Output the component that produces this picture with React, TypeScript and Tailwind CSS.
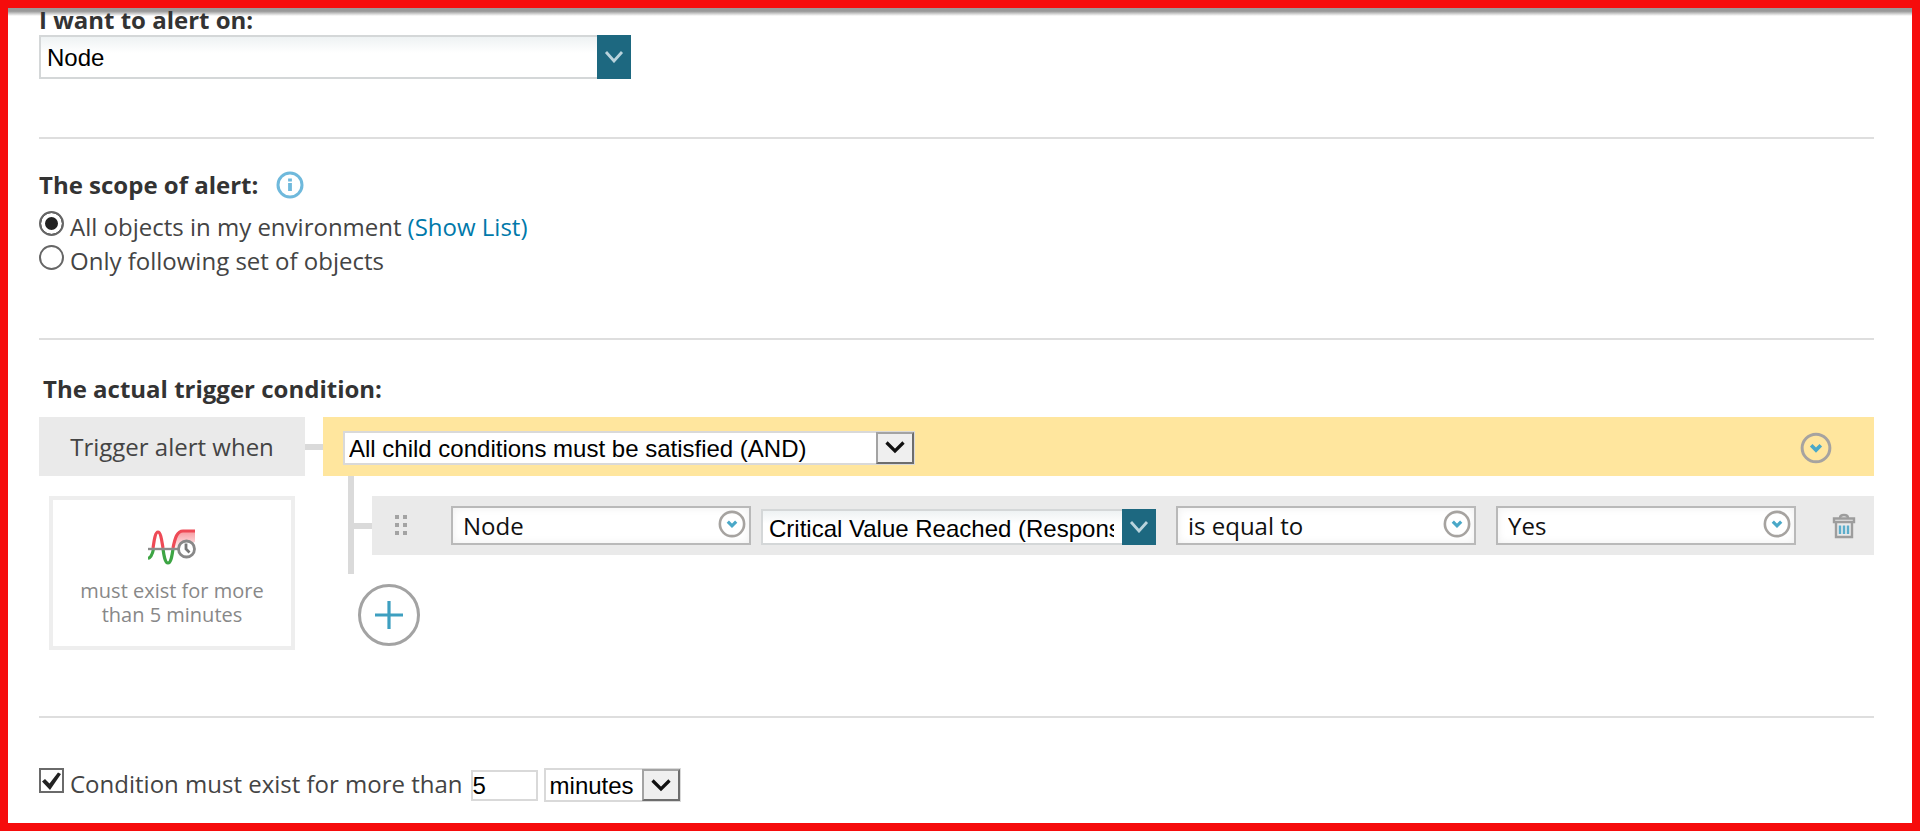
import { useState } from "react";
import type { ReactNode, SelectHTMLAttributes } from "react";

const Heading = ({ children }: { children: ReactNode }) => (
  <h2 className="text-2xl leading-8 font-bold text-[#333]">{children}</h2>
);

const Divider = () => <hr className="border-t-2 border-[#dedede]" />;

const RoundChevron = ({ className }: { className: string }) => (
  <svg viewBox="0 0 30 30" fill="none" className={className} aria-hidden="true">
    <circle cx="15" cy="15" r="13" stroke="#a6a3a0" strokeWidth="2.8" />
    <path d="M10.5 12.5l4.5 4.5 4.5-4.5" stroke="#4aa8c8" strokeWidth="3.4" />
  </svg>
);

type FieldProps = SelectHTMLAttributes<HTMLSelectElement> & { label: string; option: string };

// Combo box with the teal arrow cell
const ComboSelect = ({ label, option, className, ...rest }: FieldProps) => (
  <div className={`relative ${className}`}>
    <select
      aria-label={label}
      className="size-full appearance-none overflow-hidden border-2 border-[#d4d7d8] bg-linear-to-b from-[#eef2f3] to-white to-40% pt-0.5 pr-10 pl-1.5 font-[Liberation_Sans,Arial,sans-serif] text-black"
      {...rest}
    >
      <option>{option}</option>
    </select>
    <span className="pointer-events-none absolute inset-y-0 right-0 flex w-[34px] items-center justify-center bg-[#1d6880]">
      <svg width="20" height="12" viewBox="0 0 20 12" fill="none" aria-hidden="true">
        <path d="M2 1l8 9 8-9" stroke="#b9d3dc" strokeWidth="2.8" />
      </svg>
    </span>
  </div>
);

// Old style drop-down with the raised arrow button
const PlainSelect = ({ label, option, className, ...rest }: FieldProps) => (
  <div className={`relative h-[34px] ${className}`}>
    <select
      aria-label={label}
      className="size-full appearance-none border-2 border-[#d9d9d9] bg-white pr-10 pl-1 font-[Liberation_Sans,Arial,sans-serif] text-black"
      {...rest}
    >
      <option>{option}</option>
    </select>
    <span className="pointer-events-none absolute inset-y-px right-px flex w-[38px] items-center justify-center border-2 border-[#a3a3a3] border-r-[#6d6d6d] border-b-[#6d6d6d] bg-[#efefef]">
      <svg width="20" height="13" viewBox="0 0 20 13" fill="none" aria-hidden="true">
        <path d="M1.5 1.5l8.5 8.5 8.5-8.5" stroke="#111" strokeWidth="3.2" />
      </svg>
    </span>
  </div>
);

const RoundSelect = ({ label, option, className, ...rest }: FieldProps) => (
  <div className={`relative h-[39px] w-[300px] ${className}`}>
    <select
      aria-label={label}
      className="size-full appearance-none border-2 border-[#b9b9b9] bg-white pr-10 pl-[10px] text-[#111] shadow-[inset_0_0_8px_#eee]"
      {...rest}
    >
      <option>{option}</option>
    </select>
    <RoundChevron className="pointer-events-none absolute top-1 right-[5px] size-7" />
  </div>
);

const App = () => {
  const [scope, setScope] = useState("all");
  const [sustained, setSustained] = useState(true);
  const [duration, setDuration] = useState("5");

  const radioClass =
    "size-[25px] appearance-none rounded-full border-2 border-[#666] bg-white checked:bg-[#222] checked:shadow-[inset_0_0_0_4px_white]";

  return (
    <div className="relative min-h-screen border-8 border-[#f60c0c] bg-white pr-[38px] pl-[31px] font-['Open_Sans',sans-serif] text-2xl text-[#444]">
      <div className="pointer-events-none absolute inset-x-0 top-0 h-2 bg-linear-to-b from-[#999] from-40% to-transparent" />

      <section className="relative pb-[58px]">
        <h2 className="pb-[3px] text-2xl leading-6 font-bold text-[#333]">I want to alert on:</h2>
        <ComboSelect label="I want to alert on" option="Node" className="h-11 w-[592px]" />
      </section>
      <Divider />

      <section className="pt-[30px] pb-[60px]">
        <div className="flex items-center gap-[18px]">
          <Heading>The scope of alert:</Heading>
          <button type="button" aria-label="About the scope">
            <svg width="28" height="28" viewBox="0 0 28 28" fill="none" className="block">
              <circle cx="14" cy="14" r="12" stroke="#6fb9dc" strokeWidth="3" />
              <path d="M14 7.5v3M14 12v8" stroke="#6fb9dc" strokeWidth="3.8" />
            </svg>
          </button>
        </div>
        <div className="mt-[10px] flex h-[34px]">
          <input id="scope-all" type="radio" name="scope" className={radioClass} checked={scope === "all"} onChange={() => setScope("all")} />
          <label htmlFor="scope-all" className="ml-1.5">All objects in my environment</label>
          <a href="#list" className="ml-1.5 text-[#0079aa]">(Show List)</a>
        </div>
        <div className="flex h-[33px]">
          <input id="scope-some" type="radio" name="scope" className={radioClass} checked={scope === "some"} onChange={() => setScope("some")} />
          <label htmlFor="scope-some" className="ml-1.5">Only following set of objects</label>
        </div>
      </section>
      <Divider />

      <section className="pt-[33px] pb-[66px]">
        <div className="pl-1">
          <Heading>The actual trigger condition:</Heading>
        </div>
        <div className="mt-3 flex">
          <div className="flex w-[266px] shrink-0 flex-col">
            <div className="flex h-[59px] items-center justify-center bg-[#eaeaea]">Trigger alert when</div>
            <div className="mt-5 ml-[10px] flex h-[154px] w-[246px] flex-col items-center border-4 border-[#eee] pt-[29px] text-center text-xl leading-6 text-[#888]">
              <svg width="48" height="36" viewBox="0 0 48 36" fill="none" className="mb-[14px]" aria-hidden="true">
                <defs>
                  <linearGradient id="peak" x1="0" y1="0" x2="0" y2="1">
                    <stop offset="0" stopColor="#f4606a" stopOpacity="0.65" />
                    <stop offset="1" stopColor="#f4606a" stopOpacity="0.1" />
                  </linearGradient>
                </defs>
                <path d="M25 19C27 10 29 2 35 2h12v11L30 19z" fill="url(#peak)" />
                <path d="M5 19C6 13 7 3 10 3S14 14 15 19M25 19C27 9 29 2 35 2h12" stroke="#ee4a56" strokeWidth="3.2" />
                <path d="M0 29.5C3.5 28.5 4.5 25 5.5 20M15 20c1 7 2 14 5 14s4-7 5-14" stroke="#3da544" strokeWidth="3.2" />
                <path d="M0 20h32" stroke="#8b8b8b" strokeWidth="2.4" />
                <circle cx="38.5" cy="20" r="8" fill="#fff" stroke="#888" strokeWidth="2.8" />
                <path d="M38 14.5V20l3.5 3.5" stroke="#777" strokeWidth="2.8" />
              </svg>
              <p>
                must exist for more
                <br />
                than 5 minutes
              </p>
            </div>
          </div>
          <div className="mt-[27px] h-1.5 w-[18px] shrink-0 bg-[#dadada]" />

          <div className="grow">
            <div className="flex h-[59px] items-center justify-between bg-[#ffe69e] pt-0.5 pr-[42px] pl-5">
              <PlainSelect label="Child conditions" option="All child conditions must be satisfied (AND)" className="w-[572px]" />
              <button type="button" aria-label="Group options">
                <RoundChevron className="block size-8" />
              </button>
            </div>
            <div className="ml-[25px] flex h-[98px] border-l-6 border-[#dadada]">
              <div className="mt-[47px] h-1.5 w-[18px] shrink-0 bg-[#dadada]" />
              <div className="mt-5 flex h-[59px] grow items-center bg-[#eaeaea] pr-[18px] pl-[23px]">
                <svg width="13" height="21" viewBox="0 0 13 21" fill="#a3a3a3" className="shrink-0" aria-hidden="true">
                  <path d="M0 0h4v4H0zM8 0h4v4H8zM0 8h4v4H0zM8 8h4v4H8zM0 16h4v4H0zM8 16h4v4H8z" />
                </svg>
                <RoundSelect label="Object" option="Node" className="ml-[43px]" />
                <ComboSelect label="Field" option="Critical Value Reached (Response Time)" className="mt-0.5 ml-[10px] h-9 w-[395px]" />
                <RoundSelect label="Operator" option="is equal to" className="ml-5" />
                <RoundSelect label="Value" option="Yes" className="ml-5" />
                <button type="button" aria-label="Delete condition" className="ml-auto">
                  <svg width="24" height="26" viewBox="0 0 24 26" fill="none" className="block">
                    <path d="M8 5c0-4 8-4 8 0" stroke="#9d9d9d" strokeWidth="2.4" />
                    <path d="M2 5.5h20V9H2zM4 9v15h16V9" stroke="#9d9d9d" strokeWidth="2.4" />
                    <path d="M8 12.5V21M12 12.5V21M16 12.5V21" stroke="#5badcb" strokeWidth="2.4" />
                  </svg>
                </button>
              </div>
            </div>
            <button type="button" aria-label="Add condition" className="mt-[10px] ml-[35px] block">
              <svg width="62" height="62" viewBox="0 0 62 62" fill="none" className="block">
                <circle cx="31" cy="31" r="29.5" stroke="#a3a3a3" strokeWidth="3" />
                <path d="M31 17v28M17 31h28" stroke="#3d9fc0" strokeWidth="3.2" />
              </svg>
            </button>
          </div>
        </div>
      </section>
      <Divider />

      <section className="flex pt-[50px]">
        <div className="relative size-[25px] shrink-0">
          <input
            id="sustained"
            type="checkbox"
            className="peer block size-full appearance-none border-2 border-[#6a6a6a] bg-white"
            checked={sustained}
            onChange={(e) => setSustained(e.target.checked)}
          />
          <svg viewBox="0 0 25 25" className="pointer-events-none absolute inset-0 hidden peer-checked:block" aria-hidden="true">
            <path d="M3 13.5l3-2.5 4.5 4.5L19 4.5l3 1.5-11 16z" fill="#222" />
          </svg>
        </div>
        <label htmlFor="sustained" className="ml-1.5">Condition must exist for more than</label>
        <input
          aria-label="Duration"
          value={duration}
          onChange={(e) => setDuration(e.target.value)}
          className="mt-0.5 ml-2 h-[31px] w-[67px] border-2 border-[#d9d9d9] font-[Liberation_Sans,Arial,sans-serif] text-black"
        />
        <PlainSelect label="Duration unit" option="minutes" className="ml-1.5 w-[137px]" />
      </section>
    </div>
  );
};

export default App;
